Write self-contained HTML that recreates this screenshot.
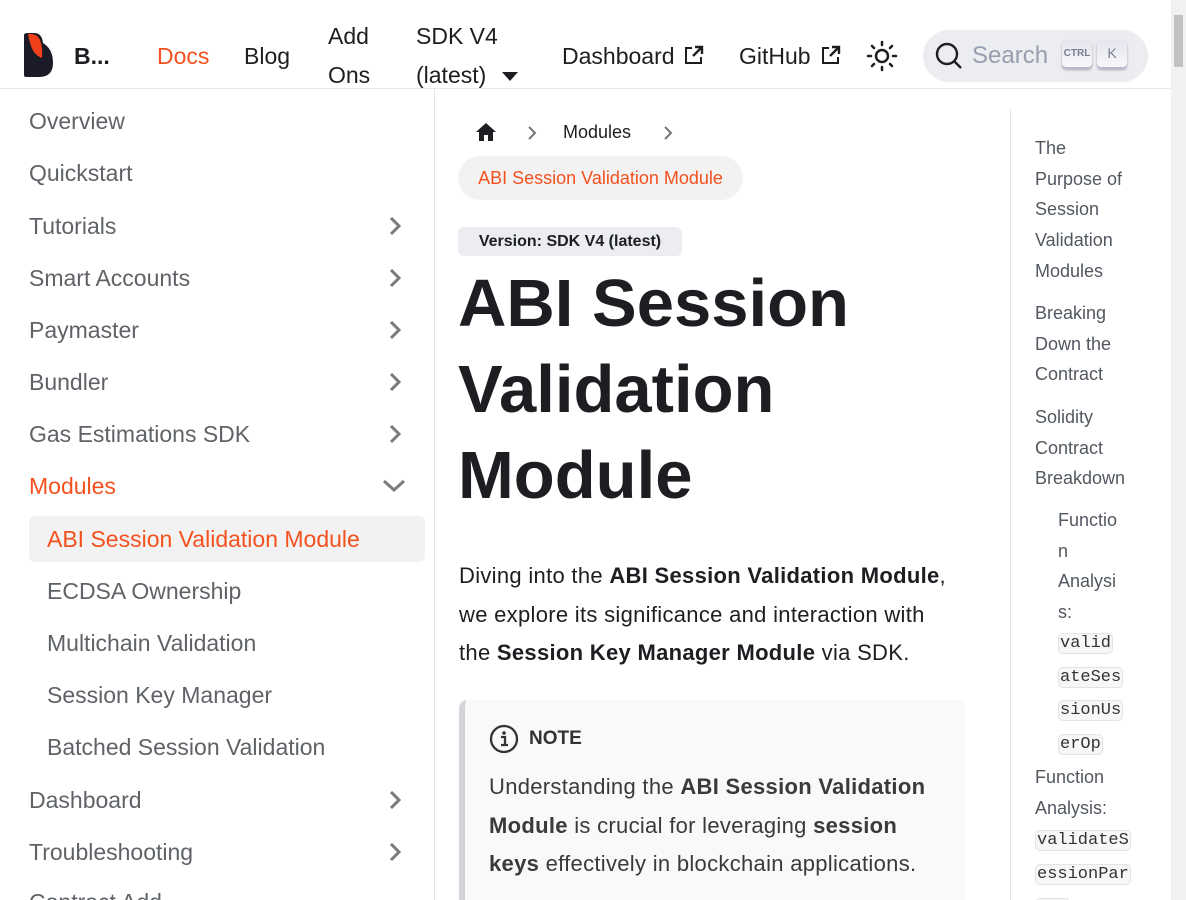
<!DOCTYPE html>
<html><head><meta charset="utf-8">
<style>
*{margin:0;padding:0;box-sizing:border-box}
html,body{width:1186px;height:900px;overflow:hidden;background:#fff;font-family:"Liberation Sans","DejaVu Sans",sans-serif;color:#1c1e21}
body{position:relative}
.a{position:absolute;white-space:nowrap}
.nav{font-size:23px;color:#1c1e21}
.sb{font-size:23px;color:#5f6368;left:29px}
.sub{left:47px}
.toc{font-size:18px;color:#525860}
code{font-family:"Liberation Mono",monospace;font-size:17px;background:#f6f7f8;border:1px solid #e3e3e3;border-radius:5px;padding:0 1px;color:#333}
.p{font-size:22px;color:#1c1e21;letter-spacing:0.3px}
</style></head><body>
<div class="a" style="left:0;top:88px;width:1171px;height:1px;background:#e8e8e8"></div>
<svg class="a" style="left:22px;top:31px" width="34" height="48" viewBox="0 0 34 48">
<path d="M2 4 Q2 2 6 2 L12 2 Q20 2 21 12 Q31 18 31 32 Q31 46 17 46 L4 46 Q2 46 2 44 Z" fill="#1a1b26"/>
<path d="M6 3 Q15 2 18 9 Q21 17 20 27 Q12 24 9 15 Q7 9 6 3 Z" fill="#f0401c"/>
</svg>
<div class="a nav" style="left:74px;top:43px;font-weight:bold">B...</div>
<div class="a nav" style="left:157px;top:43px;color:#f4511e">Docs</div>
<div class="a nav" style="left:244px;top:43px">Blog</div>
<div class="a nav" style="left:328px;top:23px">Add</div>
<div class="a nav" style="left:328px;top:62px">Ons</div>
<div class="a nav" style="left:416px;top:23px">SDK V4</div>
<div class="a nav" style="left:416px;top:62px">(latest)</div>
<svg class="a" style="left:501px;top:71px" width="18" height="12"><path d="M1 1 L17 1 L9 10 Z" fill="#1c1e21"/></svg>
<div class="a nav" style="left:562px;top:43px">Dashboard</div>
<svg class="a" style="left:684px;top:45px" width="20" height="20" viewBox="0 0 20 20"><path d="M8 3H2v15h15v-6" fill="none" stroke="#1c1e21" stroke-width="2"/><path d="M11 2h7v7M18 2l-9 9" fill="none" stroke="#1c1e21" stroke-width="2.4"/></svg>
<div class="a nav" style="left:739px;top:43px">GitHub</div>
<svg class="a" style="left:821px;top:45px" width="20" height="20" viewBox="0 0 20 20"><path d="M8 3H2v15h15v-6" fill="none" stroke="#1c1e21" stroke-width="2"/><path d="M11 2h7v7M18 2l-9 9" fill="none" stroke="#1c1e21" stroke-width="2.4"/></svg>
<svg class="a" style="left:866px;top:40px" width="32" height="32" viewBox="0 0 32 32"><circle cx="16" cy="16" r="6" fill="none" stroke="#1c1e21" stroke-width="2.5"/><g stroke="#1c1e21" stroke-width="2.5" stroke-linecap="round"><path d="M16 2v3M16 27v3M2 16h3M27 16h3M6 6l2 2M24 24l2 2M6 26l2-2M24 8l2-2"/></g></svg>
<div class="a" style="left:923px;top:30px;width:225px;height:52px;border-radius:26px;background:#ebedf0"></div>
<svg class="a" style="left:933px;top:40px" width="32" height="32" viewBox="0 0 32 32"><circle cx="14" cy="14" r="10" fill="none" stroke="#1c1e21" stroke-width="2.4"/><path d="M21 21l7 7" stroke="#1c1e21" stroke-width="2.4"/></svg>
<div class="a" style="left:972px;top:42px;font-size:24px;color:#969faf">Search</div>
<div class="a" style="left:1062px;top:41px;width:30px;height:28px;border-radius:4px;background:linear-gradient(#e5e6ee,#f8f8fc);box-shadow:inset 0 -2px 0 #b8b9cc,0 1px 2px #aaa;font-size:10px;font-weight:bold;color:#7a7d90;text-align:center;line-height:26px">CTRL</div>
<div class="a" style="left:1097px;top:41px;width:30px;height:28px;border-radius:4px;background:linear-gradient(#e5e6ee,#f8f8fc);box-shadow:inset 0 -2px 0 #b8b9cc,0 1px 2px #aaa;font-size:14px;color:#7a7d90;text-align:center;line-height:24px">K</div>
<div class="a" style="left:1171px;top:0;width:15px;height:900px;background:#f1f1f1"></div>
<div class="a" style="left:1174px;top:15px;width:9px;height:52px;background:#c1c1c1"></div>
<div class="a" style="left:434px;top:89px;width:1px;height:811px;background:#e3e3e3"></div>
<div class="a sb" style="top:108px">Overview</div>
<div class="a sb" style="top:160px">Quickstart</div>
<div class="a sb" style="top:213px">Tutorials</div>
<div class="a sb" style="top:265px">Smart Accounts</div>
<div class="a sb" style="top:317px">Paymaster</div>
<div class="a sb" style="top:369px">Bundler</div>
<div class="a sb" style="top:421px">Gas Estimations SDK</div>
<div class="a sb" style="top:473px;color:#f4511e">Modules</div>
<div class="a" style="left:29px;top:516px;width:396px;height:46px;border-radius:6px;background:#f2f2f2"></div>
<div class="a sb sub" style="top:526px;color:#f4511e">ABI Session Validation Module</div>
<div class="a sb sub" style="top:578px">ECDSA Ownership</div>
<div class="a sb sub" style="top:630px">Multichain Validation</div>
<div class="a sb sub" style="top:682px">Session Key Manager</div>
<div class="a sb sub" style="top:734px">Batched Session Validation</div>
<div class="a sb" style="top:787px">Dashboard</div>
<div class="a sb" style="top:839px">Troubleshooting</div>
<div class="a sb" style="top:889px">Contract Add...</div>
<svg width="0" height="0" style="position:absolute"><defs><path id="cr" d="M4 1l8 8-8 8" fill="none" stroke="#7a7a7a" stroke-width="3"/></defs></svg>
<svg class="a" style="left:387px;top:217px" width="16" height="20"><use href="#cr"/></svg>
<svg class="a" style="left:387px;top:269px" width="16" height="20"><use href="#cr"/></svg>
<svg class="a" style="left:387px;top:321px" width="16" height="20"><use href="#cr"/></svg>
<svg class="a" style="left:387px;top:373px" width="16" height="20"><use href="#cr"/></svg>
<svg class="a" style="left:387px;top:425px" width="16" height="20"><use href="#cr"/></svg>
<svg class="a" style="left:387px;top:791px" width="16" height="20"><use href="#cr"/></svg>
<svg class="a" style="left:387px;top:843px" width="16" height="20"><use href="#cr"/></svg>
<svg class="a" style="left:382px;top:478px" width="24" height="16"><path d="M2 3l10 9 10-9" fill="none" stroke="#7a7a7a" stroke-width="3"/></svg>
<svg class="a" style="left:475px;top:122px" width="22" height="20" viewBox="0 0 22 20"><path d="M11 1L1 10h3v9h5v-6h4v6h5v-9h3z" fill="#1c1e21"/></svg>
<svg class="a" style="left:527px;top:126px" width="10" height="14"><path d="M2 1l6 6-6 6" fill="none" stroke="#777" stroke-width="2"/></svg>
<div class="a" style="left:563px;top:122px;font-size:18px;color:#1c1e21">Modules</div>
<svg class="a" style="left:663px;top:126px" width="10" height="14"><path d="M2 1l6 6-6 6" fill="none" stroke="#777" stroke-width="2"/></svg>
<div class="a" style="left:458px;top:156px;width:285px;height:44px;border-radius:22px;background:#f2f2f2;color:#f4511e;font-size:18px;line-height:44px;text-align:center">ABI Session Validation Module</div>
<div class="a" style="left:458px;top:227px;width:224px;height:29px;border-radius:6px;background:#ebedf0;font-size:16px;font-weight:bold;line-height:29px;text-align:center">Version: SDK V4 (latest)</div>
<div class="a" style="left:458px;top:261px;font-size:67px;font-weight:bold;line-height:86px;color:#1c1e21">ABI Session<br>Validation<br>Module</div>
<div class="a p" style="left:459px;top:557px;line-height:38.5px">Diving into the <b>ABI Session Validation Module</b>,<br>we explore its significance and interaction with<br>the <b>Session Key Manager Module</b> via SDK.</div>
<div class="a" style="left:459px;top:700px;width:506px;height:200px;border-radius:8px 8px 0 0;background:#f9f9fa;border-left:6px solid #d4d5d8"></div>
<svg class="a" style="left:489px;top:724px" width="30" height="30" viewBox="0 0 30 30"><circle cx="15" cy="15" r="13" fill="none" stroke="#333" stroke-width="2.3"/><circle cx="15" cy="9" r="1.8" fill="#333"/><path d="M12 13h4v8M12 21h7" fill="none" stroke="#333" stroke-width="2.3"/></svg>
<div class="a" style="left:529px;top:728px;font-size:19px;font-weight:bold;color:#333">NOTE</div>
<div class="a p" style="left:489px;top:768px;line-height:38.5px;color:#3a3a3a">Understanding the <b>ABI Session Validation</b><br><b>Module</b> is crucial for leveraging <b>session</b><br><b>keys</b> effectively in blockchain applications.</div>
<div class="a" style="left:1010px;top:110px;width:1px;height:790px;background:#e3e3e3"></div>
<div class="a toc" style="left:1035px;top:133px;line-height:30.7px">The<br>Purpose of<br>Session<br>Validation<br>Modules</div>
<div class="a toc" style="left:1035px;top:298px;line-height:30.7px">Breaking<br>Down the<br>Contract</div>
<div class="a toc" style="left:1035px;top:402px;line-height:30.7px">Solidity<br>Contract<br>Breakdown</div>
<div class="a toc" style="left:1058px;top:505px;line-height:30.7px">Functio<br>n<br>Analysi<br>s:</div>
<div class="a toc" style="left:1058px;top:626px;line-height:30.7px"><code>valid</code><br><code>ateSes</code><br><code>sionUs</code><br><code>erOp</code></div>
<div class="a toc" style="left:1035px;top:762px;line-height:30.7px">Function<br>Analysis:<br><code>validateS</code><br><code>essionPar</code><br><code>ams</code></div>
</body></html>
